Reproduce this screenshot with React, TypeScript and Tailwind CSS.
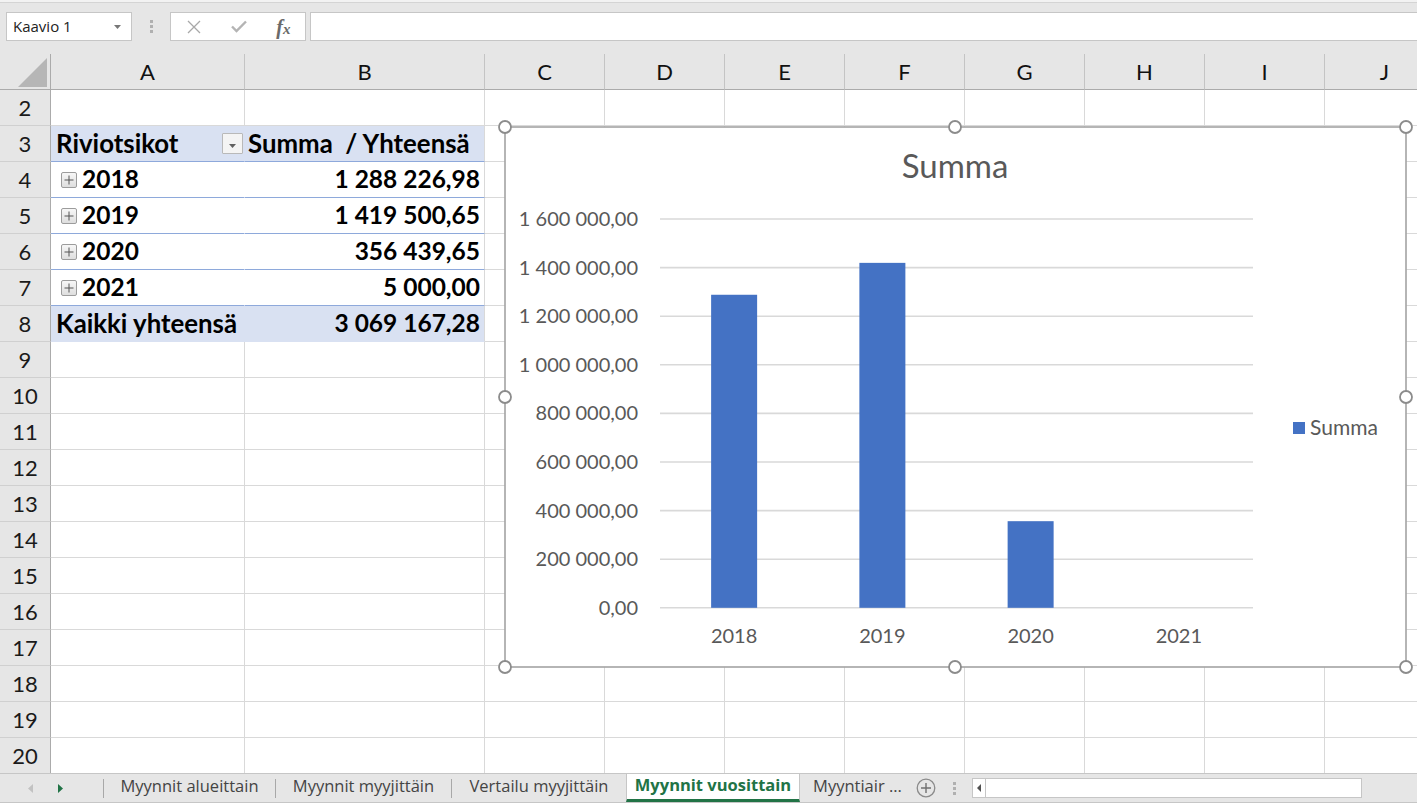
import React from "react";

const COLS: { k: string; w: string }[] = [
  { k: "A", w: "w-[194px]" },
  { k: "B", w: "w-[240px]" },
  { k: "C", w: "w-[120px]" },
  { k: "D", w: "w-[120px]" },
  { k: "E", w: "w-[120px]" },
  { k: "F", w: "w-[120px]" },
  { k: "G", w: "w-[120px]" },
  { k: "H", w: "w-[120px]" },
  { k: "I", w: "w-[120px]" },
  { k: "J", w: "w-[120px]" },
];

const YEARS: Record<number, { y: string; v: string }> = {
  4: { y: "2018", v: "1 288 226,98" },
  5: { y: "2019", v: "1 419 500,65" },
  6: { y: "2020", v: "356 439,65" },
  7: { y: "2021", v: "5 000,00" },
};

const CELL = "h-full shrink-0 border-r border-b border-[#d9d9d9] bg-white";

function ExpandBox() {
  return (
    <span className="mr-[5px] flex h-[16px] w-[16px] shrink-0 items-center justify-center rounded-[2px] border border-[#9c9c9c] bg-gradient-to-b from-[#f7f7f7] to-[#dedede]">
      <svg width="10" height="10" viewBox="0 0 10 10">
        <path d="M5 0.5V9.5M0.5 5H9.5" stroke="#555" strokeWidth="1" />
      </svg>
    </span>
  );
}

function FilterButton() {
  return (
    <span className="flex h-[21px] w-[21px] items-end justify-center rounded-[1px] border border-[#b9b9b9] bg-[#f4f4f4] pb-[5px]">
      <svg width="7" height="4" viewBox="0 0 7 4">
        <path d="M0 0H7L3.5 4Z" fill="#606060" />
      </svg>
    </span>
  );
}

function GridRow({ n }: { n: number }) {
  let aCls = CELL;
  let bCls = CELL;
  let a: React.ReactNode = null;
  let b: React.ReactNode = null;
  const boldText = "font-['Lato',sans-serif] font-bold text-[25.8px] text-black";
  const digitText = "font-['Lato',sans-serif] font-bold text-[24.5px] text-black";
  if (n === 3) {
    aCls = "h-full shrink-0 border-b border-r border-r-transparent border-b-[#8ea9db] bg-[#d9e1f2]";
    bCls = "h-full shrink-0 border-b border-r border-r-[#d9d9d9] border-b-[#8ea9db] bg-[#d9e1f2]";
    a = (
      <div className="flex h-full items-center justify-between pl-[5px] pr-[1px]">
        <span className={boldText}>Riviotsikot</span>
        <FilterButton />
      </div>
    );
    b = (
      <div className="flex h-full items-center pl-[3px]">
        <span className={`${boldText} whitespace-pre`}>Summa  / Yhteensä</span>
      </div>
    );
  } else if (YEARS[n]) {
    aCls = "h-full shrink-0 border-b border-r border-r-transparent border-b-[#8ea9db] bg-white";
    bCls = "h-full shrink-0 border-b border-r border-r-[#d9d9d9] border-b-[#8ea9db] bg-white";
    a = (
      <div className="flex h-full items-center pl-[10px]">
        <ExpandBox />
        <span className={digitText}>{YEARS[n].y}</span>
      </div>
    );
    b = (
      <div className="flex h-full items-center justify-end pr-[4px]">
        <span className={digitText}>{YEARS[n].v}</span>
      </div>
    );
  } else if (n === 8) {
    aCls = "h-full shrink-0 border-b border-r border-r-transparent border-b-[#d9e1f2] bg-[#d9e1f2]";
    bCls = "h-full shrink-0 border-b border-r border-r-[#d9d9d9] border-b-[#d9e1f2] bg-[#d9e1f2]";
    a = (
      <div className="flex h-full items-center pl-[5px]">
        <span className={boldText}>Kaikki yhteensä</span>
      </div>
    );
    b = (
      <div className="flex h-full items-center justify-end pr-[4px]">
        <span className={digitText}>3 069 167,28</span>
      </div>
    );
  }
  return (
    <div className="flex h-[36px] shrink-0">
      <div className="flex h-full w-[51px] shrink-0 items-center justify-center border-b border-r border-b-[#d0d0d0] border-r-[#ababab] bg-[#e6e6e6] font-['Lato',sans-serif] text-[22px] text-[#1a1a1a]">
        {n}
      </div>
      {COLS.map((c) => (
        <div
          key={c.k}
          className={`${c.k === "A" ? aCls : c.k === "B" ? bCls : CELL} ${c.w}`}
        >
          {c.k === "A" ? a : c.k === "B" ? b : null}
        </div>
      ))}
    </div>
  );
}

function Chart() {
  const top = 92;
  const step = 48.6;
  const zero = top + step * 8;
  const labels = [
    "1 600 000,00",
    "1 400 000,00",
    "1 200 000,00",
    "1 000 000,00",
    "800 000,00",
    "600 000,00",
    "400 000,00",
    "200 000,00",
    "0,00",
  ];
  const data = [
    { y: "2018", v: 1288226.98 },
    { y: "2019", v: 1419500.65 },
    { y: "2020", v: 356439.65 },
    { y: "2021", v: 5000 },
  ];
  const plotL = 155;
  const plotR = 748;
  const cw = (plotR - plotL) / 4;
  const handles = [
    [0, 0],
    [450, 0],
    [901, 0],
    [0, 270],
    [901, 270],
    [0, 540],
    [450, 540],
    [901, 540],
  ];
  return (
    <svg
      className="absolute left-[505px] top-[127px] overflow-visible font-['Lato',sans-serif]"
      width="901"
      height="540"
      viewBox="0 0 901 540"
    >
      <rect x="0" y="0" width="901" height="540" fill="#fff" stroke="#a3a3a3" strokeWidth="1.6" />
      <text x="450" y="51" textAnchor="middle" fontSize="33" fill="#595959">
        Summa
      </text>
      {labels.map((l, i) => {
        const y = top + step * i;
        return (
          <g key={l}>
            <line x1={plotL} x2={plotR} y1={y} y2={y} stroke="#d9d9d9" strokeWidth="1.6" />
            <text x="133" y={y + 7} textAnchor="end" fontSize="20" fill="#595959">
              {l}
            </text>
          </g>
        );
      })}
      {data.map((d, i) => {
        const cx = plotL + cw * i + cw / 2;
        const h = (d.v / 1600000) * (step * 8);
        return (
          <g key={d.y}>
            {h > 2 ? (
              <rect x={cx - 23} y={zero - h} width="46" height={h} fill="#4472c4" />
            ) : null}
            <text x={cx} y={zero + 35} textAnchor="middle" fontSize="20" fill="#595959">
              {d.y}
            </text>
          </g>
        );
      })}
      <rect x="788" y="295" width="12" height="12" fill="#4472c4" />
      <text x="805" y="308" fontSize="21" fill="#595959">
        Summa
      </text>
      {handles.map(([x, y]) => (
        <circle key={`${x}-${y}`} cx={x} cy={y} r="6" fill="#fff" stroke="#8c8c8c" strokeWidth="1.8" />
      ))}
    </svg>
  );
}

function FormulaBar() {
  return (
    <div className="h-[54px] shrink-0">
      <div className="h-[2px] bg-[#f2f2f2]" />
      <div className="h-[1px] bg-[#d4d4d4]" />
      <div className="mt-[9px] flex h-[29px] pl-[6px]">
        <div className="flex h-full w-[126px] shrink-0 items-center justify-between border border-[#c6c6c6] bg-white pl-[6px] pr-[10px] font-['Open_Sans',sans-serif] text-[15px] text-[#222]">
          <span>Kaavio 1</span>
          <svg width="7" height="4" viewBox="0 0 7 4">
            <path d="M0 0H7L3.5 4Z" fill="#777" />
          </svg>
        </div>
        <div className="flex h-full w-[38px] shrink-0 flex-col items-center justify-center gap-[2px]">
          <span className="h-[3px] w-[3px] bg-[#b0b0b0]" />
          <span className="h-[3px] w-[3px] bg-[#b0b0b0]" />
          <span className="h-[3px] w-[3px] bg-[#b0b0b0]" />
        </div>
        <div className="flex h-full w-[136px] shrink-0 items-center border border-[#c6c6c6] bg-white">
          <div className="flex w-[46px] justify-center">
            <svg width="14" height="14" viewBox="0 0 14 14">
              <path d="M1 1L13 13M13 1L1 13" stroke="#a8a8a8" strokeWidth="1.3" />
            </svg>
          </div>
          <div className="flex w-[46px] justify-center">
            <svg width="16" height="13" viewBox="0 0 16 13">
              <path d="M1 6.5L5.5 11L15 1.5" stroke="#b4b4b4" strokeWidth="2.4" fill="none" />
            </svg>
          </div>
          <div className="flex w-[44px] justify-center font-['Liberation_Serif',serif] text-[20px] font-bold italic text-[#6a6a6a]">
            <span>
              f<span className="text-[15px]">x</span>
            </span>
          </div>
        </div>
        <div className="ml-[4px] h-full flex-1 border border-r-0 border-[#c6c6c6] bg-white" />
      </div>
    </div>
  );
}

function HeaderRow() {
  return (
    <div className="flex h-[36px] shrink-0">
      <div className="relative h-full w-[51px] shrink-0 border-b border-r border-[#ababab] bg-[#e6e6e6]">
        <svg className="absolute left-0 top-0" width="50" height="36" viewBox="0 0 50 36">
          <path d="M47 4V33H18Z" fill="#b6b6b6" />
        </svg>
      </div>
      {COLS.map((c) => (
        <div
          key={c.k}
          className={`${c.w} flex h-full shrink-0 items-center justify-center border-b border-r border-b-[#ababab] border-r-[#c4c4c4] bg-[#e6e6e6] font-['Lato',sans-serif] text-[22px] text-[#111]`}
        >
          {c.k}
        </div>
      ))}
    </div>
  );
}

function TabBar() {
  const tabText = "font-['Open_Sans',sans-serif] text-[16.5px] text-[#444] whitespace-nowrap";
  const sep = <div className="h-[19px] w-[1px] shrink-0 bg-[#a8a8a8]" />;
  return (
    <div className="flex h-[29px] shrink-0 items-center border-t border-[#c6c6c6] bg-[#e6e6e6]">
      <div className="flex h-full w-[103px] shrink-0 items-center">
        <div className="flex w-[33px] justify-end">
          <svg width="5" height="9" viewBox="0 0 5 9">
            <path d="M5 0V9L0 4.5Z" fill="#c2c2c2" />
          </svg>
        </div>
        <div className="ml-[25px]">
          <svg width="5" height="9" viewBox="0 0 5 9">
            <path d="M0 0V9L5 4.5Z" fill="#217346" />
          </svg>
        </div>
      </div>
      {sep}
      <div className="flex w-[171px] shrink-0 justify-center pb-[4px]">
        <span className={tabText}>Myynnit alueittain</span>
      </div>
      {sep}
      <div className="flex w-[175px] shrink-0 justify-center pb-[4px]">
        <span className={tabText}>Myynnit myyjittäin</span>
      </div>
      {sep}
      <div className="flex w-[174px] shrink-0 justify-center pb-[4px]">
        <span className={tabText}>Vertailu myyjittäin</span>
      </div>
      <div className="flex h-full w-[174px] shrink-0 items-center justify-center border-x border-b-[3px] border-x-[#c6c6c6] border-b-[#217346] bg-white pb-[2px]">
        <span className="whitespace-nowrap font-['Open_Sans',sans-serif] text-[16.5px] font-bold text-[#217346]">
          Myynnit vuosittain
        </span>
      </div>
      <div className="flex w-[115px] shrink-0 justify-center pb-[4px]">
        <span className={tabText}>Myyntiair ...</span>
      </div>
      <div className="flex w-[22px] shrink-0 justify-center">
        <svg width="20" height="20" viewBox="0 0 20 20">
          <circle cx="10" cy="10" r="8.8" fill="none" stroke="#8a8a8a" strokeWidth="1.3" />
          <path d="M10 5V15M5 10H15" stroke="#707070" strokeWidth="1.4" />
        </svg>
      </div>
      <div className="flex w-[35px] shrink-0 flex-col items-center gap-[2px]">
        <span className="h-[3px] w-[3px] bg-[#b0b0b0]" />
        <span className="h-[3px] w-[3px] bg-[#b0b0b0]" />
        <span className="h-[3px] w-[3px] bg-[#b0b0b0]" />
      </div>
      <div className="flex h-[20px] w-[390px] shrink-0 border border-[#c6c6c6] bg-white">
        <div className="flex h-full w-[13px] shrink-0 items-center justify-center border-r border-[#c6c6c6]">
          <svg width="4" height="8" viewBox="0 0 4 8">
            <path d="M4 0V8L0 4Z" fill="#505050" />
          </svg>
        </div>
      </div>
    </div>
  );
}

export default function App() {
  const rows = Array.from({ length: 19 }, (_, i) => i + 2);
  return (
    <div className="relative flex h-[805px] w-[1417px] flex-col overflow-hidden bg-[#e6e6e6]">
      <FormulaBar />
      <div className="flex h-[719px] shrink-0 flex-col overflow-hidden">
        <HeaderRow />
        {rows.map((n) => (
          <GridRow key={n} n={n} />
        ))}
      </div>
      <TabBar />
      <div className="h-[3px] shrink-0 border-t border-[#c6c6c6] bg-white" />
      <Chart />
    </div>
  );
}
